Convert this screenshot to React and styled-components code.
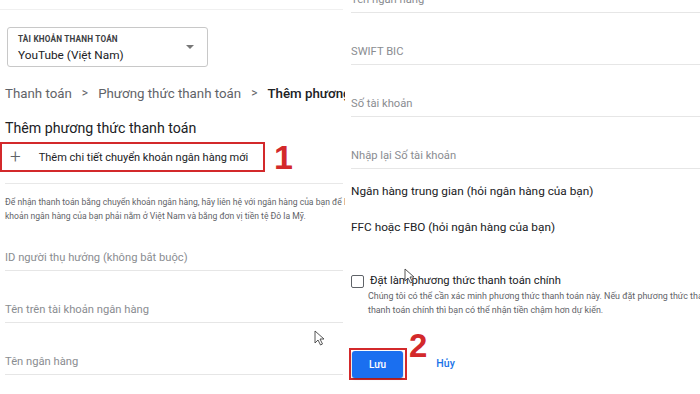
import React from "react";
import styled, { createGlobalStyle } from "styled-components";

const Global = createGlobalStyle`
  html, body { margin: 0; padding: 0; background: #fff; }
  body { font-family: Roboto, "Noto Sans", Arial, sans-serif; width: 700px; height: 394px; overflow: hidden; }
  * { box-sizing: border-box; }
`;

const Page = styled.div`
  position: relative;
  display: flex;
  width: 700px;
  height: 394px;
  overflow: hidden;
  background: #fff;
`;

const LeftPanel = styled.div`
  width: 345px;
  flex: none;
  padding-left: 5px;
  padding-right: 2px;
  display: flex;
  flex-direction: column;
  overflow: hidden;
`;

const RightPanel = styled.div`
  flex: 1;
  padding-left: 6px;
  margin-top: -8px;
  display: flex;
  flex-direction: column;
  overflow: hidden;
`;

const TopRule = styled.div`
  height: 10px;
  margin-left: -5px;
  border-bottom: 1px solid #f0f0f0;
  flex: none;
`;

const Select = styled.div`
  margin-top: 17px;
  margin-left: 2px;
  width: 201px;
  height: 40px;
  border: 1px solid #c8c8c8;
  border-radius: 3px;
  display: flex;
  align-items: center;
  justify-content: space-between;
  padding: 0 11px 0 10px;
  flex: none;
`;

const SelectText = styled.div`
  display: flex;
  flex-direction: column;
  gap: 4px;
  margin-top: 1px;
`;

const SelectLabel = styled.div`
  font-size: 8.2px;
  font-weight: 700;
  letter-spacing: 0.2px;
  color: #3c4043;
  line-height: 10px;
`;

const SelectValue = styled.div`
  font-size: 11.8px;
  color: #202124;
  line-height: 14px;
`;

const Caret = styled.div`
  width: 0;
  height: 0;
  margin-right: 2px;
  border-left: 4px solid transparent;
  border-right: 4px solid transparent;
  border-top: 4px solid #777;
`;

const Breadcrumb = styled.div`
  margin-top: 16px;
  height: 20px;
  display: flex;
  align-items: center;
  white-space: nowrap;
  font-size: 13.3px;
  color: #5f6368;
  flex: none;
`;

const Crumb = styled.span`
  color: ${(p) => (p.$current ? "#202124" : "#5f6368")};
  font-weight: ${(p) => (p.$current ? 500 : 400)};
`;

const Sep = styled.span`
  margin: 0 10px;
  font-size: 12px;
  color: #5f6368;
`;

const Heading = styled.h1`
  margin: 15px 0 0;
  font-size: 14.2px;
  font-weight: 400;
  line-height: 20px;
  color: #202124;
`;

const AddLine = styled.div`
  margin-top: 4px;
  display: flex;
  align-items: flex-start;
  gap: 9px;
  flex: none;
`;

const Highlight = styled.div`
  border: 2px solid #d3292b;
  display: flex;
  align-items: center;
`;

const AddRow = styled(Highlight)`
  margin-left: -5px;
  width: 265px;
  height: 30px;
  padding-left: 8px;
  gap: 18px;
  font-size: 11px;
  color: #202124;
`;

const Plus = styled.span`
  font-size: 19px;
  font-weight: 300;
  color: #5f6368;
  line-height: 1;
  margin-top: -2px;
`;

const Number = styled.span`
  font-family: "Liberation Sans", Arial, sans-serif;
  font-weight: 700;
  font-size: 34px;
  line-height: 30px;
  color: #d3292b;
`;

const Divider = styled.div`
  margin-top: 11px;
  height: 1px;
  background: #e8e8e8;
  flex: none;
`;

const Note = styled.p`
  margin: ${(p) => p.$margin || "11px 0 0"};
  font-size: ${(p) => p.$size || "8.6px"};
  line-height: 14px;
  color: #5f6368;
  white-space: nowrap;
`;

const Fields = styled.div`
  margin-top: ${(p) => p.$top || "0"};
  display: flex;
  flex-direction: column;
  gap: 31px;
  flex: none;
`;

const Field = styled.div`
  height: 21px;
  padding-bottom: 4px;
  border-bottom: 1px solid #e6e6e6;
  font-size: 11.2px;
  line-height: 16px;
  color: #8a8d91;
  white-space: nowrap;
`;

const Plain = styled.div`
  margin-top: ${(p) => p.$top};
  font-size: 11.8px;
  line-height: 16px;
  color: #202124;
  white-space: nowrap;
`;

const CheckRow = styled.div`
  margin-top: 38px;
  display: flex;
  align-items: center;
  gap: 6px;
  font-size: 11.2px;
  color: #202124;
  line-height: 16px;
`;

const Box = styled.span`
  width: 13px;
  height: 13px;
  border: 1.5px solid #5f6368;
  border-radius: 2px;
  flex: none;
`;

const CheckNote = styled(Note)`
  padding-left: 17px;
`;

const Actions = styled.div`
  margin-top: 17px;
  display: flex;
  align-items: flex-start;
  flex: none;
`;

const ButtonFrame = styled(Highlight)`
  margin-top: 14px;
  margin-left: -2px;
  width: 58px;
  height: 32px;
  padding: 1px 2px 1px 1px;
`;

const SaveButton = styled.button`
  width: 51px;
  height: 27px;
  border: none;
  border-radius: 3px;
  background: #1a6ff0;
  color: #fff;
  font-family: Roboto, Arial, sans-serif;
  font-size: 10px;
  font-weight: 500;
  box-shadow: 0 1px 2px rgba(0, 0, 0, 0.3);
`;

const ActionNumber = styled(Number)`
  font-size: 33px;
  line-height: 33px;
  margin-left: 2px;
  margin-top: -5px;
`;

const CancelLink = styled.span`
  margin-top: 23px;
  margin-left: 9px;
  font-size: 10.5px;
  font-weight: 500;
  color: #1a73e8;
`;

const Pointer = styled.svg`
  position: absolute;
  left: ${(p) => p.$x}px;
  top: ${(p) => p.$y}px;
  pointer-events: none;
`;

const Arrow = ({ x, y }) => (
  <Pointer $x={x} $y={y} width="11" height="16" viewBox="0 0 11 16">
    <path d="M1 1 L1 13 L4 10 L6.5 15 L8.5 14 L6 9 L10 9 Z" fill="#fff" stroke="#444" strokeWidth="0.9" strokeLinejoin="round" />
  </Pointer>
);

export default function App() {
  return (
    <Page>
      <Global />
      <LeftPanel>
        <TopRule />
        <Select>
          <SelectText>
            <SelectLabel>TÀI KHOẢN THANH TOÁN</SelectLabel>
            <SelectValue>YouTube (Việt Nam)</SelectValue>
          </SelectText>
          <Caret />
        </Select>
        <Breadcrumb>
          <Crumb>Thanh toán</Crumb>
          <Sep>&gt;</Sep>
          <Crumb>Phương thức thanh toán</Crumb>
          <Sep>&gt;</Sep>
          <Crumb $current>Thêm phương thức thanh toán</Crumb>
        </Breadcrumb>
        <Heading>Thêm phương thức thanh toán</Heading>
        <AddLine>
          <AddRow>
            <Plus>+</Plus>
            <span>Thêm chi tiết chuyển khoản ngân hàng mới</span>
          </AddRow>
          <Number>1</Number>
        </AddLine>
        <Divider />
        <Note>
          Để nhận thanh toán bằng chuyển khoản ngân hàng, hãy liên hệ với ngân hàng của bạn để biết thông tin chi tiết. Tài
          <br />
          khoản ngân hàng của bạn phải nằm ở Việt Nam và bằng đơn vị tiền tệ Đô la Mỹ.
        </Note>
        <Fields $top="27px">
          <Field>ID người thụ hưởng (không bắt buộc)</Field>
          <Field>Tên trên tài khoản ngân hàng</Field>
          <Field>Tên ngân hàng</Field>
        </Fields>
      </LeftPanel>
      <RightPanel>
        <Fields>
          <Field>Tên ngân hàng</Field>
          <Field>SWIFT BIC</Field>
          <Field>Số tài khoản</Field>
          <Field>Nhập lại Số tài khoản</Field>
        </Fields>
        <Plain $top="14px">Ngân hàng trung gian (hỏi ngân hàng của bạn)</Plain>
        <Plain $top="20px">FFC hoặc FBO (hỏi ngân hàng của bạn)</Plain>
        <CheckRow>
          <Box />
          <span>Đặt làm phương thức thanh toán chính</span>
        </CheckRow>
        <CheckNote $margin="0" $size="8.9px">
          Chúng tôi có thể cần xác minh phương thức thanh toán này. Nếu đặt phương thức thanh toán này làm
          <br />
          thanh toán chính thì bạn có thể nhận tiền chậm hơn dự kiến.
        </CheckNote>
        <Actions>
          <ButtonFrame>
            <SaveButton>Lưu</SaveButton>
          </ButtonFrame>
          <ActionNumber>2</ActionNumber>
          <CancelLink>Hủy</CancelLink>
        </Actions>
      </RightPanel>
      <Arrow x={314} y={330} />
      <Arrow x={404} y={268} />
    </Page>
  );
}
